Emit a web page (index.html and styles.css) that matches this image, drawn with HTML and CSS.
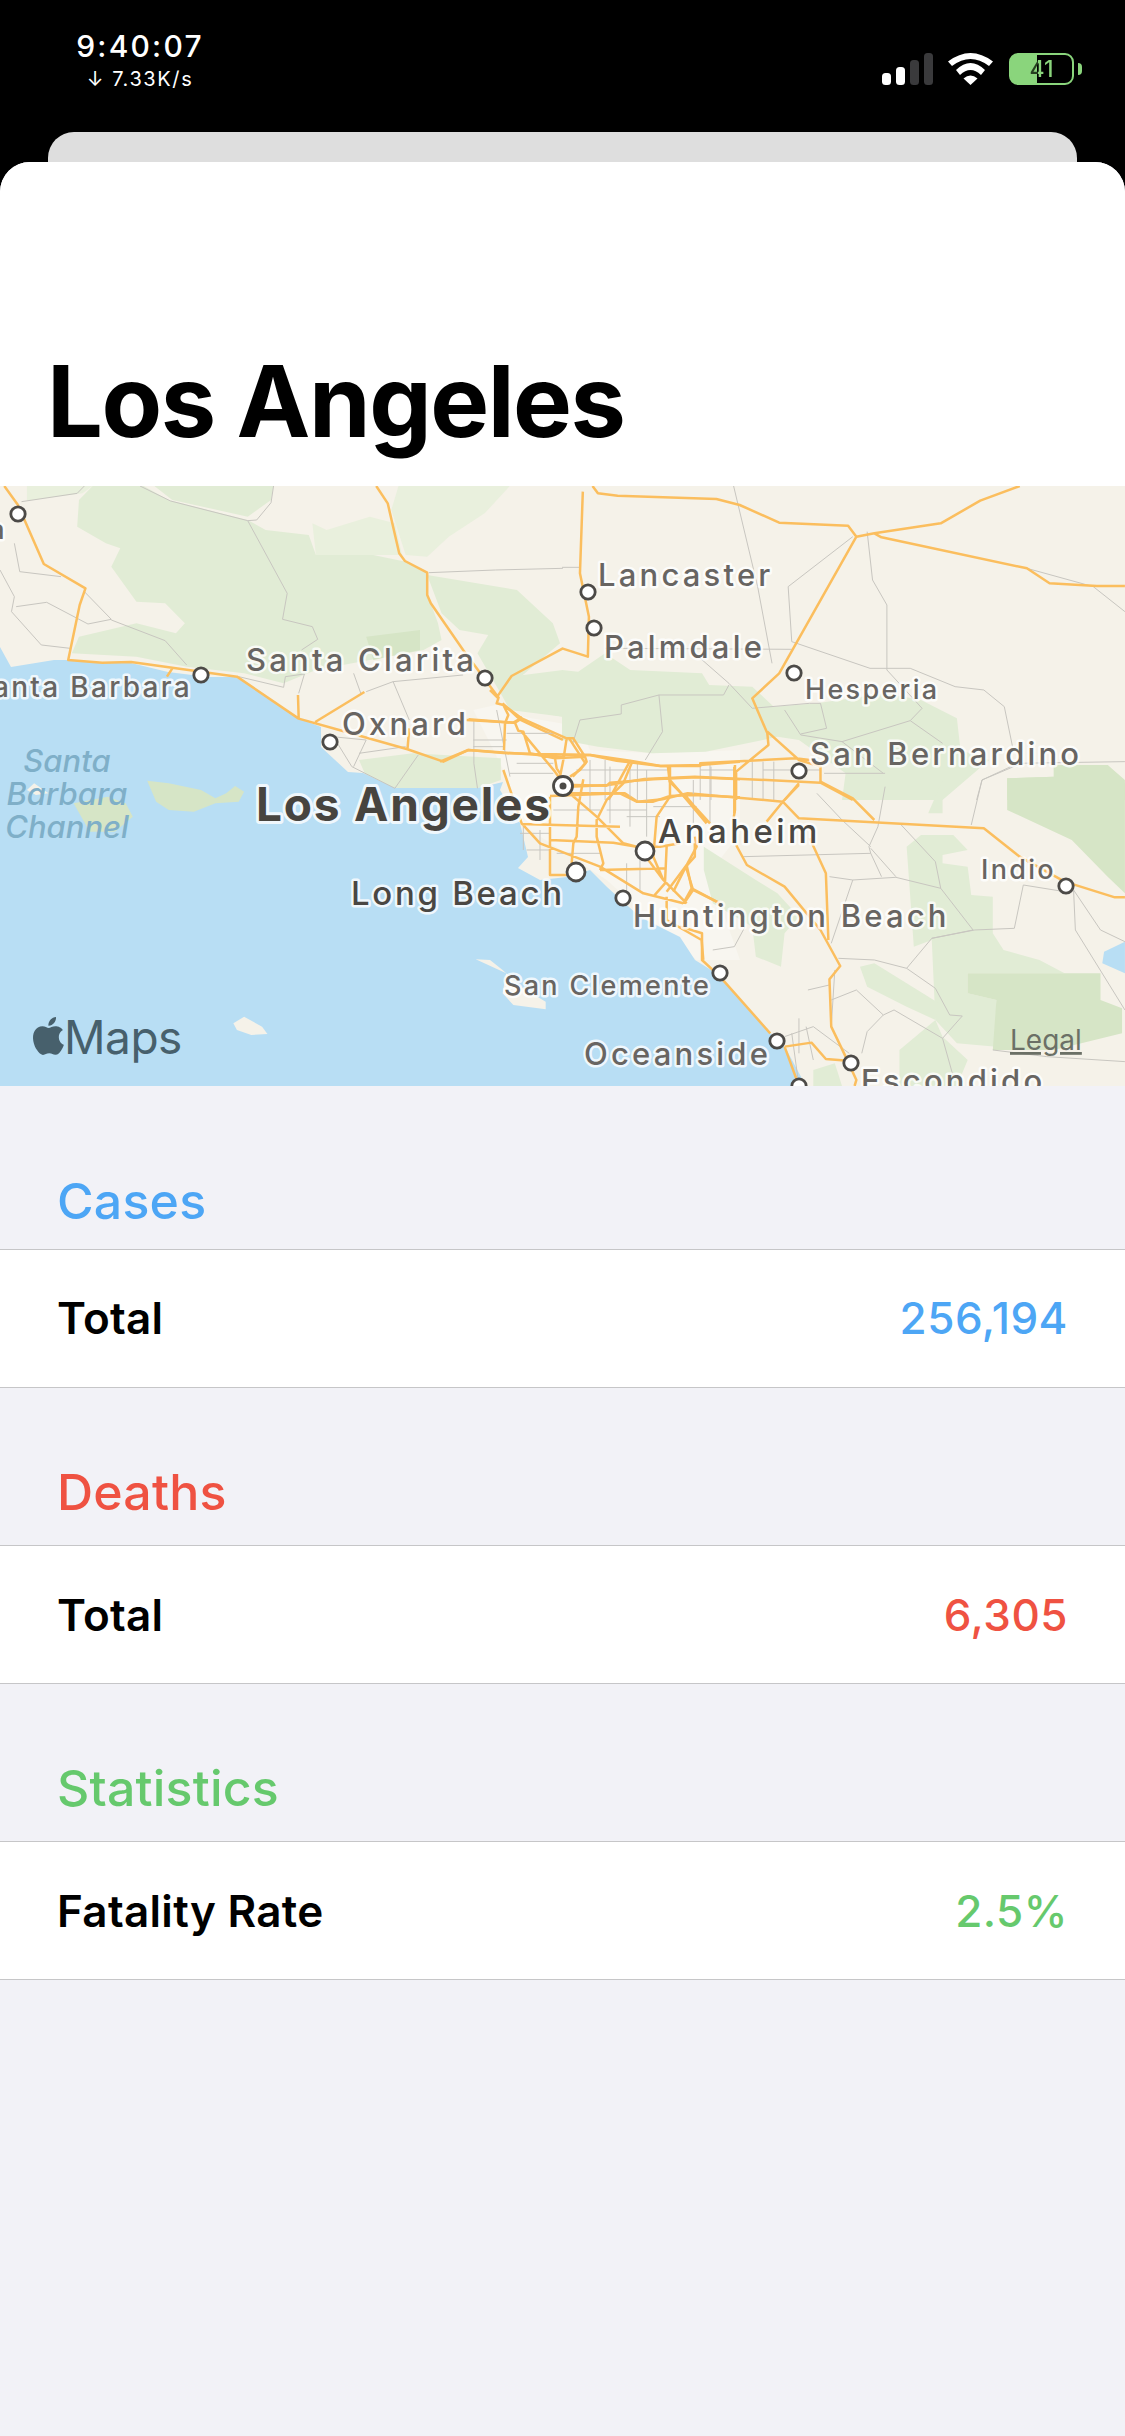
FILE: index.html
```html
<!DOCTYPE html>
<html lang="en">
<head>
<meta charset="utf-8">
<title>Los Angeles</title>
<link rel="stylesheet" href="styles.css">
</head>
<body>
<div class="status">
  <div class="clock">
    <div class="time">9:40:07</div>
    <div class="speed">↓ 7.33K/s</div>
  </div>
  <div class="indicators">
    <svg class="signal" width="51" height="32" viewBox="0 0 51 32">
      <rect class="on" x="0" y="20" width="9" height="12" rx="3.5"/>
      <rect class="on" x="14" y="14" width="9" height="18" rx="3.5"/>
      <rect class="off" x="28" y="7" width="9" height="25" rx="3.5"/>
      <rect class="off" x="42" y="0" width="9" height="32" rx="3.5"/>
    </svg>
    <svg class="wifi" width="45" height="32" viewBox="0 0 45 32">
      <path d="M0 8.5Q22.5 -8.5 45 8.5L41 13Q22.5 -1 4 13Z"/>
      <path d="M8 17Q22.5 3 37 17L33 22Q22.5 12 12 22Z"/>
      <path d="M22.5 32L15.5 25.5Q22.5 19.5 29.5 25.5Z"/>
    </svg>
    <div class="battery"><span class="level">41</span></div>
    <div class="nub"></div>
  </div>
</div>
<div class="sheet-back"></div>
<main class="sheet">
  <header class="title-bar"><h1 class="title">Los Angeles</h1></header>
  <svg class="map" width="1125" height="600" viewBox="0 486 1125 600">
    <rect x="0" y="486" width="1125" height="600" fill="#f5f2e9"/>

    <g transform="translate(440 690) scale(.3333)">
      <path class="urban" d="M100 60L190 40L250 80L420 110L450 180L640 190L900 180L900 430L800 560L840 640L900 810L770 810L500 570L240 400L190 240Z"/>
    </g>

    <g transform="translate(0 480) scale(.359 .3333)">
      <path class="g1" d="M220 60L258 18L400 18L470 60L690 120L740 150L860 165L880 225L1040 225L1130 245L1190 280L1190 340L1220 430L1230 480L1180 510L880 570L790 610L680 580L520 560L380 530L200 520L220 470L380 430L490 460L515 430L460 370L380 365L310 260L335 205L295 190L215 140Z"/>
      <path class="g1" d="M430 18L480 60L690 110L755 60L762 18Z"/>
      <path class="g3" d="M1090 90L1110 18L1420 18L1350 100L1250 170L1190 230L1130 225Z"/>
      <path class="g3" d="M870 130L910 150L1030 110L1100 130L1120 225L880 225Z"/>
      <path class="g3" d="M75 62L230 40L258 18L75 18Z"/>
      <path class="g2" d="M1020 470L1170 450L1170 510L1040 540Z"/>
      <path class="g1" d="M1190 285L1440 330L1540 430L1560 490L1440 600L1568 710L1420 690L1400 650L1330 520L1360 465L1280 450L1230 400Z"/>
      <path class="g1" d="M1000 840L1150 820L1395 835L1395 900L1330 925L1100 925L1020 890Z"/>
      <path class="g1" d="M1420 590L1568 570L1568 710L1460 690Z"/>
    </g>

    <g transform="translate(562 480) scale(.359 .3333)">
      <path class="g1" d="M0 570L45 575L120 520L190 570L390 580L410 615L530 620L590 680L710 670L900 640L1000 660L1100 715L1110 810L1190 840L1060 960L780 960L790 880L660 780L600 770L560 780L400 815L250 820L100 800L0 780Z"/>
      <path class="g2" d="M1240 895L1370 890L1370 855L1520 855L1568 910L1568 960L1240 960Z"/>
    </g>

    <g transform="translate(562 760) scale(.359 .3333)">
      <path class="g2" d="M1240 55L1370 50L1370 15L1520 15L1568 60L1568 400L1520 350L1420 240L1240 150Z"/>
      <path class="g1" d="M1020 160L1060 60L1060 160Z"/>
      <path class="g1" d="M960 260L1000 225L1090 225L1130 270L1060 285L1060 310L1130 320L1140 405L1200 410L1200 520L1230 570L1330 600L1400 640L1130 640L1130 700L1210 720L1210 860L1100 850L1040 780L1030 540L980 560Z"/>
      <path class="g2" d="M1130 640L1500 640L1500 720L1560 745L1560 820L1370 870L1200 870L1210 720L1130 700Z"/>
      <path class="g1" d="M940 870L1040 780L1060 830L1130 900L1100 978L940 978Z"/>
      <path class="g1" d="M830 620L870 610L1050 730L1040 780L960 740L850 680Z"/>
      <path class="g1" d="M395 260L540 360L600 400L660 470L620 520L610 620L540 590L530 500L420 430L395 330Z"/>
      <path class="g1" d="M700 978L700 930L760 910L780 978Z"/>
      <path class="lake" d="M1568 545L1510 575L1505 610L1568 640Z"/>
    </g>

    <path class="water" d="M0 647L11 667L54 660L68 660L102 663L131 663L168 672L208 677L235 677L258 690L298 718L321 727L321 747L348 772L363 773L395 788L478 788L503 782L500 790L520 823L528 857L518 868L540 880L567 877L590 870L607 887L640 917L680 937L695 960L716 973L770 1033L785 1047L806 1086L0 1086Z"/>

    <g transform="translate(0 760) scale(.359 .3333)">
      <path class="g2" d="M410 62L470 70L560 90L600 115L630 100L655 78L680 95L665 125L600 130L540 155L470 150L435 125Z"/>
      <path class="g2" d="M205 130L300 110L350 130L370 170L320 215L250 215Z"/>
      <path class="isle" d="M75 90L95 70L135 100L100 105Z"/>
      <path class="isle" d="M650 790L680 770L730 800L745 822L700 825L660 810Z"/>
      <path class="isle" d="M1325 598L1365 600L1400 630L1450 680L1520 725L1520 748L1430 735L1400 700L1410 640Z"/>
    </g>

    <g transform="translate(0 480) scale(.359 .3333)">
      <path class="minor" d="M0 270L40 350L32 395L115 495L195 505M45 380L130 367L245 432L310 418L235 335M40 190L55 275L170 290M60 65L215 40L235 18M390 18L475 63L690 122L715 120L755 68L762 18M690 122L800 340L787 418L870 440L885 478L840 510M310 420L460 482L520 555M665 590L790 622L795 590L848 582L832 640M985 580L1005 640M1020 635L1095 605L1290 585M1095 605L1140 720M1195 278L1380 270L1568 265M925 770L1020 780L985 860M940 790L980 860L1100 925L1165 825M1320 720L1320 850L1330 925M1000 820L1130 800"/>
      <path class="road" d="M12 18L50 75L122 252L238 325L222 375L190 540L285 548L365 546L540 572L660 590L832 716L945 750L1135 808L1235 845L1305 810L1568 830M480 565L465 590M832 716L830 645M878 726L1015 636M1140 745L1135 808M1048 18L1080 70L1112 220L1128 243L1190 278L1190 345L1200 370L1290 510L1390 655M1385 650L1425 588L1568 505M1400 670L1450 720L1568 780M1305 718L1430 728L1455 712"/>
    </g>

    <g transform="translate(562 480) scale(.359 .3333)">
      <path class="minor" d="M478 18L545 320L585 550M0 262L50 262M120 505L640 508M380 530L465 610L530 685L690 670L720 670M465 615L450 645L270 645L165 675L165 702L50 720L30 790M270 645L280 755L232 840M630 320L640 485L858 565L970 565L1095 620L1175 630L1232 680L1255 800M630 320L810 170M850 155L865 300L905 375L905 570L1003 685L970 722L780 785L665 765L620 690M720 670L737 745L665 762M970 722L1060 790M1295 265L1480 320L1568 395M1170 900L1270 850L1568 845M1170 900L1155 960M780 785L895 880"/>
      <path class="minor" d="M120 840V960M210 850V960M385 860V960M415 860V960M530 845V960M560 845V960M590 845V960M40 870H300M385 870H480M560 870H720M720 860V905M730 880H900"/>
      <path class="road" d="M85 18L100 40L155 47L430 57L495 75L605 128L797 137L820 170L870 160L1055 130L1165 62L1275 18M870 160L890 172L1295 265L1358 310L1490 318L1568 318M58 35L50 280L75 410L72 530L0 505M820 170L605 580L530 655L572 760L575 795L485 875L485 960M572 755L660 840L720 860L720 905M0 825L80 825L190 842L275 858L385 858L385 850L650 835L690 840M190 842L130 960M295 860L300 905L350 960M20 920L130 915L230 897L370 890L720 908L810 960M20 775L65 850L30 890M660 910L620 960"/>
    </g>

    <g transform="translate(562 760) scale(.359 .3333)">
      <path class="minor" d="M505 290L860 280L855 260L880 200L900 80M745 350L810 360L930 352L1055 385L1145 510L1030 535L960 625L870 600L770 595M1055 385L1040 305L945 195M860 280L890 350M860 265L930 350M810 360L750 550M1030 535L1150 510L1260 505L1285 375L1400 395M1425 390L1430 510L1568 750M1425 390L1500 510L1568 545M960 625L1040 685L1080 765L1115 768L1060 835L925 750L895 765L850 815L835 880M750 720L820 690L895 765M1060 835L1090 950M1200 870L1350 890L1568 905M1140 195L1170 60L1280 10M760 630L750 800M685 690L745 675M710 100L780 180L860 260M660 775L660 880M620 830L700 800L800 880M420 570L480 560L510 500M640 820L660 978M680 800L700 900"/>
      <path class="road" d="M20 100L175 100L210 125L280 118L350 100L615 125L660 175L1175 205L1275 290L1400 365L1540 412L1568 412M660 75L615 125L570 185M720 65L810 115L870 180M480 20L480 160M485 255L515 315L620 380L720 510L775 618L745 658L750 800L790 890L820 960L815 978M690 235L735 340L742 540M580 820L440 650L390 600L390 520L330 500M620 860L660 978M620 860L695 848L735 897L805 903M370 250L370 290L345 320L310 395M345 320L365 390L440 430M365 390L340 430"/>
    </g>

    <g transform="translate(440 690) scale(.3333)">
      <path class="minor" d="M200 130H340M100 150H200M100 170H190M230 220H340M210 250H340M450 210V360M510 230V400M570 230V410M620 240V440M760 270V400M810 220V400M340 360H480M500 360H620M240 430H330M260 480H330M350 490H480M560 380H660M600 500V600M560 520V610M640 350H770M170 60L210 260M250 410V480M300 420V510"/>
      <path class="road" d="M150 0L175 25L170 40L190 45L245 85L380 145L400 145L435 200L440 215L420 240L390 260M190 45L205 75L195 100L192 180M80 90L225 98L245 85M225 98L235 122L250 125L270 190L345 205L350 235L360 250M245 125L345 245L395 315M0 215L85 180L200 190L450 195L530 212L660 228L780 225L900 215M380 145L370 210L360 260M345 205L435 200M330 318L540 310L590 335L640 335L690 318L760 315L900 322M430 268L415 350L410 440L400 460L395 520M400 285L500 287L510 278L640 268L770 262L900 268M578 212L550 280L500 330L470 390L470 440L490 520L480 540M395 315L470 380L550 460L590 470M690 230L690 320L650 380L640 500L670 570M690 270L800 400M735 315L760 345L810 400M190 240L245 400L300 460L480 530L610 610L730 640M330 320L330 555L380 555M245 402L540 410M330 450L520 458L590 470M480 540L680 535M610 490L670 570L740 640M680 470L675 580L640 620M680 605L740 525L770 470L765 440M740 525L755 595L840 640M755 595L730 640M610 470L660 470L720 460M680 620L680 690L785 750L790 810M885 225L885 360L880 390"/>
    </g>

    <circle class="pin" cx="18" cy="514" r="7.2"/>
    <circle class="pin" cx="201" cy="675" r="7.2"/>
    <circle class="pin" cx="485" cy="678" r="7.2"/>
    <circle class="pin" cx="330" cy="742" r="7.2"/>
    <circle class="pin" cx="588" cy="592" r="7.2"/>
    <circle class="pin" cx="594" cy="628" r="7.2"/>
    <circle class="pin" cx="794" cy="673" r="7.2"/>
    <circle class="pin" cx="799" cy="771" r="7.2"/>
    <circle class="pin" cx="623" cy="898" r="7.2"/>
    <circle class="pin" cx="720" cy="973" r="7.2"/>
    <circle class="pin" cx="1066" cy="886" r="7.2"/>
    <circle class="pin" cx="777" cy="1041" r="7.2"/>
    <circle class="pin" cx="851" cy="1063" r="7.2"/>
    <circle class="pin" cx="799" cy="1086" r="7.2"/>
    <circle class="pin" cx="645" cy="851" r="9"/>
    <circle class="pin" cx="576" cy="872" r="9"/>
    <circle class="pin" cx="563" cy="786" r="9.5"/>
    <circle class="pin-dot" cx="563" cy="786" r="3.5"/>

    <text class="place small" x="7" y="539" text-anchor="end">Santa Maria</text>
    <text class="place coast" x="192" y="697" text-anchor="end">Santa Barbara</text>
    <text class="place" x="246" y="671">Santa Clarita</text>
    <text class="place" x="342" y="735">Oxnard</text>
    <text class="place" x="598" y="586">Lancaster</text>
    <text class="place" x="604" y="658">Palmdale</text>
    <text class="place small" x="805" y="699">Hesperia</text>
    <text class="place" x="810" y="765">San Bernardino</text>
    <text class="place big" x="256" y="821">Los Angeles</text>
    <text class="place mid" x="351" y="905">Long Beach</text>
    <text class="place mid wide" x="658" y="843">Anaheim</text>
    <text class="place" x="633" y="927">Huntington Beach</text>
    <text class="place small" x="504" y="995">San Clemente</text>
    <text class="place" x="584" y="1065">Oceanside</text>
    <text class="place" x="861" y="1092">Escondido</text>
    <text class="place small" x="981" y="879">Indio</text>
    <text class="sea" x="67" y="772" text-anchor="middle">Santa</text>
    <text class="sea" x="67" y="805" text-anchor="middle">Barbara</text>
    <text class="sea" x="67" y="838" text-anchor="middle">Channel</text>

    <path class="apple" transform="translate(29.5 1017) scale(1.58)" d="M12.152 6.896c-.948 0-2.415-1.078-3.96-1.04-2.04.027-3.91 1.183-4.961 3.014-2.117 3.675-.546 9.103 1.519 12.09 1.013 1.454 2.208 3.09 3.792 3.039 1.52-.065 2.09-.987 3.935-.987 1.831 0 2.35.987 3.96.948 1.637-.026 2.676-1.48 3.676-2.948 1.156-1.688 1.636-3.325 1.662-3.415-.039-.013-3.182-1.221-3.22-4.857-.026-3.04 2.48-4.494 2.597-4.559-1.429-2.09-3.623-2.324-4.39-2.376-2-.156-3.675 1.09-4.61 1.09zM15.53 3.83c.843-1.012 1.4-2.427 1.245-3.83-1.207.052-2.662.805-3.532 1.818-.78.896-1.454 2.338-1.273 3.714 1.338.104 2.715-.688 3.559-1.701"/>
    <text class="maps" x="64" y="1054">Maps</text>
    <text class="legal" x="1010" y="1050">Legal</text>
  </svg>

  <section>
    <h2 class="head head-first cases">Cases</h2>
    <div class="row"><span class="label">Total</span><span class="value cases">256,194</span></div>
  </section>
  <section>
    <h2 class="head deaths">Deaths</h2>
    <div class="row"><span class="label">Total</span><span class="value deaths">6,305</span></div>
  </section>
  <section>
    <h2 class="head stats">Statistics</h2>
    <div class="row"><span class="label">Fatality Rate</span><span class="value stats">2.5%</span></div>
  </section>
</main>
</body>
</html>
```

FILE: styles.css
```css
* { box-sizing: border-box; }
html, body { margin: 0; padding: 0; }
body {
  width: 1125px;
  height: 2436px;
  overflow: hidden;
  background: #000;
  font-family: Inter, "Liberation Sans", sans-serif;
  display: flex;
  flex-direction: column;
}

/* status bar */
.status {
  height: 132px;
  flex: none;
  display: flex;
  justify-content: space-between;
  color: #fff;
}
.clock {
  width: 280px;
  display: flex;
  flex-direction: column;
  align-items: center;
  padding-top: 28px;
}
.time { font-size: 30px; line-height: 36px; font-weight: 500; letter-spacing: 2.2px; }
.speed { font-size: 20px; line-height: 26px; letter-spacing: 1.6px; margin-top: 2px; }
.indicators {
  display: flex;
  align-items: flex-start;
  padding: 53px 43px 0 0;
}
.signal { margin-right: 15px; }
.signal .on { fill: #fff; }
.signal .off { fill: #3a3a3c; }
.wifi { margin-right: 16px; }
.wifi path { fill: #fff; }
.battery {
  width: 65px;
  height: 32px;
  border: 2px solid #8ad57c;
  border-radius: 9px;
  background: linear-gradient(90deg, #8ad57c 26px, #000 26px);
  display: flex;
  align-items: center;
  justify-content: center;
}
.level {
  font-size: 23px;
  line-height: 28px;
  font-weight: 500;
  background: linear-gradient(90deg, #25401f 9px, #8ad57c 9px);
  -webkit-background-clip: text;
  background-clip: text;
  color: transparent;
}
.nub {
  width: 4px;
  height: 12px;
  margin: 10px 0 0 4px;
  background: #8ad57c;
  border-radius: 0 6px 6px 0;
}

/* stacked sheets */
.sheet-back {
  height: 30px;
  flex: none;
  margin: 0 48px;
  background: #dedede;
  border-radius: 26px 26px 0 0;
}
.sheet {
  flex: 1;
  background: #f2f2f7;
  border-radius: 30px 30px 0 0;
  overflow: hidden;
}
.title-bar {
  height: 324px;
  background: #fff;
  display: flex;
  align-items: flex-end;
  padding: 0 0 35px 47px;
}
.title {
  margin: 0;
  font-size: 99px;
  line-height: 99px;
  font-weight: 700;
  color: #000;
  letter-spacing: -1.5px;
}

/* map */
.map { display: block; }
.map path { vector-effect: non-scaling-stroke; }
.urban { fill: #f8f6f0; }
.g1 { fill: #e1ecd5; }
.g2 { fill: #d6e5c6; }
.g3 { fill: #e9f0dd; }
.water, .lake { fill: #b8def4; }
.isle { fill: #f5f2e9; }
.minor { fill: none; stroke: #c8c6c0; stroke-width: 1; }
.road { fill: none; stroke: #fbbe5e; stroke-width: 2.5; stroke-linejoin: round; }
.pin { fill: #fff; stroke: #4c4a47; stroke-width: 2.8; }
.pin-dot { fill: #4c4a47; }
.place {
  font-size: 31px;
  font-weight: 500;
  letter-spacing: 3.2px;
  fill: #686562;
  stroke: rgba(255, 255, 255, .8);
  stroke-width: 5px;
  stroke-linejoin: round;
  paint-order: stroke;
}
.place.small { font-size: 27px; letter-spacing: 2.3px; }
.place.coast { font-size: 28px; letter-spacing: 2.3px; }
.place.mid { font-size: 33px; letter-spacing: 2.7px; fill: #4a4743; }
.place.wide { letter-spacing: 3.4px; }
.place.big { font-size: 46px; font-weight: 700; letter-spacing: 1.8px; fill: #47443f; stroke-width: 6px; }
.sea { font-size: 31px; font-style: italic; font-weight: 500; fill: #7fafc8; }
.apple { fill: #47606c; }
.maps { font-size: 46px; letter-spacing: -.5px; fill: #47606c; }
.legal { font-size: 28px; fill: #6b7066; text-decoration: underline; }

/* sections */
section { display: block; }
.head {
  margin: 0;
  height: 157.5px;
  display: flex;
  align-items: flex-end;
  padding: 0 0 23px 57px;
  font-size: 50px;
  line-height: 60px;
  font-weight: 550;
  letter-spacing: .2px;
}
.head-first { height: 163px; padding-bottom: 18px; }
.row {
  height: 138.7px;
  background: #fff;
  border-top: 1px solid #c6c6c8;
  border-bottom: 1px solid #c6c6c8;
  display: flex;
  align-items: center;
  justify-content: space-between;
  padding: 0 57px;
  font-size: 44px;
}
.label { font-weight: 600; letter-spacing: .3px; color: #000; }
.value { font-weight: 550; letter-spacing: .5px; }
.cases { color: #4da6f5; }
.deaths { color: #ef5242; }
.stats { color: #66c96d; }
```
